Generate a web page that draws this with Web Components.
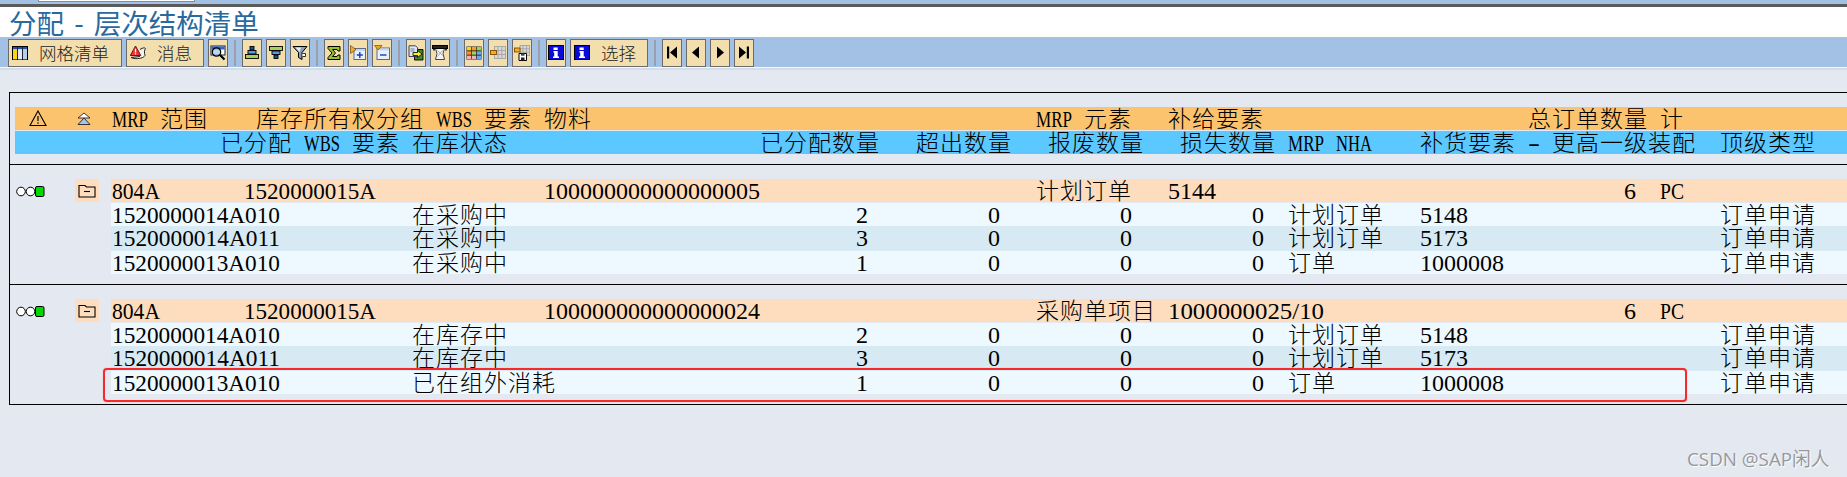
<!DOCTYPE html>
<html lang="zh"><head><meta charset="utf-8"><title>分配 - 层次结构清单</title>
<style>
html,body{margin:0;padding:0;background:#E4E8F0;width:1847px;height:477px;overflow:hidden}
body{font-family:"Liberation Serif","Noto Sans CJK SC",serif;color:#000}
</style></head><body>
<template id="ic-table"><svg viewBox="0 0 16 16"><rect x=".5" y="1.500" width="15" height="13" fill="#fff" stroke="#000"/><rect x="1" y="2" width="14" height="2.400" fill="#244fb0"/><rect x="1" y="4.400" width="4" height="10" fill="#ffd21c"/><rect x="6" y="4.400" width="4" height="10" fill="#dfe9f8"/><rect x="11" y="4.400" width="4" height="10" fill="#b7cdea"/><path d="M5.500 2v12M10.500 2v12" stroke="#223"/></svg></template>
<template id="ic-msg"><svg viewBox="0 0 16 16"><path d="M10 4.500c3-2 5-2 5.500-1-1 1-1.500 4-.5 7-1.500 2.500-6 3.500-11 3l-3-1 9-1" fill="#f2f2ea" stroke="#222" stroke-width="1"/><path d="M5.500 1 10.800 10.500H.300Z" fill="#f0303a" stroke="#5a1010" stroke-width=".9"/><path d="M5.500 3.800v3.600M5.500 8.200v1.200" stroke="#fff" stroke-width="1.300"/></svg></template>
<template id="ic-find"><svg viewBox="0 0 16 16"><rect x="1" y="1" width="14" height="9" fill="#fff" stroke="#123"/><rect x="1.500" y="1.500" width="13" height="3" fill="#2f66c8"/><circle cx="6.500" cy="7" r="4.200" fill="#9cc4f2" fill-opacity=".7" stroke="#000" stroke-width="1.200"/><path d="M10 10l4.500 4.500" stroke="#000" stroke-width="2.200"/></svg></template>
<template id="ic-asc"><svg viewBox="0 0 16 16"><rect x="6" y="1.500" width="4" height="3.500" fill="#1f4f9c" stroke="#000" stroke-width=".9"/><rect x="4" y="5.500" width="8" height="3.500" fill="#5a9ad6" stroke="#000" stroke-width=".9"/><rect x="1.500" y="9.500" width="13" height="4" fill="#a8cf5a" stroke="#000" stroke-width=".9"/></svg></template>
<template id="ic-desc"><svg viewBox="0 0 16 16"><rect x="1.500" y="1.500" width="13" height="4" fill="#a8cf5a" stroke="#000" stroke-width=".9"/><rect x="4" y="6" width="8" height="3.500" fill="#5a9ad6" stroke="#000" stroke-width=".9"/><rect x="6" y="10" width="4" height="3.500" fill="#1f4f9c" stroke="#000" stroke-width=".9"/></svg></template>
<template id="ic-filter"><svg viewBox="0 0 16 16"><path d="M1 1.500h14L10 7.500v7l-3.500-2V7.500Z" fill="#8f9dc0" stroke="#000" stroke-width="1"/><path d="M3.500 2.500H9L7.500 7Z" fill="#e8edf8"/><path d="M10.500 8.500h3v3h-3" fill="#fff" stroke="#000" stroke-width=".8"/></svg></template>
<template id="ic-sum"><svg viewBox="0 0 16 16"><path d="M2 1.500h12v4.500h-2L11 4.500H6.500L9.500 8 6.500 11.500H11l1-1.500h2v4.500H2v-2L6 8 2 3.500Z" fill="#9cc030" stroke="#000" stroke-width="1"/></svg></template>
<template id="ic-plus"><svg viewBox="0 0 16 16"><rect x="4" y="3.500" width="11.500" height="11" fill="#e8f0fc" stroke="#5a6a90"/><rect x="4.500" y="4" width="10.500" height="1.800" fill="#c5d4ec"/><path d="M.5.500 6 4.500.5 8.500Z" fill="#f7a81c" stroke="#5a3800" stroke-width=".6"/><path d="M9.800 7v6M6.800 10h6" stroke="#1a3ea8" stroke-width="1.400"/></svg></template>
<template id="ic-minus"><svg viewBox="0 0 16 16"><rect x="3" y="3" width="12.500" height="11.500" fill="#e8f0fc" stroke="#5a6a90"/><rect x="3.500" y="3.500" width="11.500" height="1.800" fill="#c5d4ec"/><path d="M.5.500H8L4.200 5Z" fill="#f7a81c" stroke="#5a3800" stroke-width=".6"/><path d="M6 10h6.500" stroke="#1a3ea8" stroke-width="1.400"/></svg></template>
<template id="ic-export"><svg viewBox="0 0 16 16"><path d="M6.500 4.500h8.500v10.500H6.500Z" fill="#3d8a28" stroke="#000" stroke-width=".9"/><path d="M1 .8h6.500l2 2V11.500H1Z" fill="#dde8f6" stroke="#26304a" stroke-width=".9"/><path d="M2.500 4h4M2.500 6h4" stroke="#6a7fa5"/><path d="M5 7.500h4.500V5.500L14 9l-4.500 3.500v-2H5Z" fill="#ffe836" stroke="#000" stroke-width=".8"/></svg></template>
<template id="ic-print"><svg viewBox="0 0 16 16"><path d="M3.500 3.500H12.500L11 8.500l1.500 6H3.500L5 8.500Z" fill="#f4f4f4" stroke="#333" stroke-width=".9"/><path d="M5.500 5.500l5 5M10.500 5.500l-5 6" stroke="#999" stroke-width=".8"/><rect x=".5" y=".5" width="15" height="3" fill="#222" stroke="#000"/><path d="M2 3.500v2M14 3.500v2" stroke="#000" stroke-width="1.500"/></svg></template>
<template id="ic-layout"><svg viewBox="0 0 16 16"><rect x=".5" y="1.500" width="15" height="13" fill="#222"/><g><rect x="1" y="2" width="4.200" height="3.400" fill="#ffd21c"/><rect x="5.900" y="2" width="4.200" height="3.400" fill="#ff9a2e"/><rect x="10.800" y="2" width="4.200" height="3.400" fill="#9bd55a"/><rect x="1" y="6.300" width="4.200" height="3.400" fill="#ff8a3c"/><rect x="5.900" y="6.300" width="4.200" height="3.400" fill="#9bd55a"/><rect x="10.800" y="6.300" width="4.200" height="3.400" fill="#6aa8f0"/><rect x="1" y="10.600" width="4.200" height="3.400" fill="#f5b0b8"/><rect x="5.900" y="10.600" width="4.200" height="3.400" fill="#f5b0b8"/><rect x="10.800" y="10.600" width="4.200" height="3.400" fill="#6aa8f0"/></g></svg></template>
<template id="ic-choose"><svg viewBox="0 0 16 16"><rect x="4.500" y="1.500" width="11" height="12" fill="#d8d8d8" stroke="#a8a8a8"/><path d="M8 1.500v12M11.800 1.500v12M4.500 5.500h11M4.500 9.500h11" stroke="#a8a8a8"/><rect x=".5" y="5.500" width="6" height="4" fill="#ffa91e" stroke="#7a4d00" stroke-width=".9"/></svg></template>
<template id="ic-save"><svg viewBox="0 0 16 16"><rect x="6" y=".5" width="9.500" height="10" fill="#d8d8d8" stroke="#a8a8a8"/><path d="M9 .5v10M12.500 .5v10M6 3.800h9.500M6 7.200h9.500" stroke="#a8a8a8"/><rect x=".5" y="3" width="5.500" height="4" fill="#ffa91e" stroke="#7a4d00" stroke-width=".9"/><path d="M5 8.500h7.500v7H5Z" fill="#fff" stroke="#000" stroke-width="1"/><rect x="7" y="8.500" width="3.500" height="2.200" fill="#444"/><rect x="7" y="12.500" width="3.500" height="3" fill="#222"/></svg></template>
<template id="ic-info"><svg viewBox="0 0 16 16"><rect x=".5" y=".5" width="15" height="14" fill="#0a0ad8" stroke="#000"/><path d="M5.500 2.500h4.200v2.500H5.500ZM5.500 6h4.200v5.500h1.300v1.500H5v-1.500h1.200V7.500h-.7Z" fill="#fff"/></svg></template>
<template id="ic-first"><svg viewBox="0 0 16 16"><path d="M3 1.500h2.200v12H3ZM13 1.500v12L6 7.500Z" fill="#000"/></svg></template>
<template id="ic-prev"><svg viewBox="0 0 16 16"><path d="M11 1.500v12L4 7.500Z" fill="#000"/></svg></template>
<template id="ic-next"><svg viewBox="0 0 16 16"><path d="M5 1.500v12L12 7.500Z" fill="#000"/></svg></template>
<template id="ic-last"><svg viewBox="0 0 16 16"><path d="M3 1.500v12L10 7.500ZM10.800 1.500H13v12h-2.200Z" fill="#000"/></svg></template>

<sap-shell>
  <sap-title>分配 - 层次结构清单</sap-title>
  <sap-toolbar>
    <sap-btn icon="table" w="114">网格清单</sap-btn>
    <sap-btn icon="msg" w="78">消息</sap-btn>
    <sap-btn icon="find"></sap-btn>
    <sap-sep></sap-sep>
    <sap-btn icon="asc"></sap-btn><sap-btn icon="desc"></sap-btn><sap-btn icon="filter"></sap-btn>
    <sap-sep></sap-sep>
    <sap-btn icon="sum"></sap-btn><sap-btn icon="plus"></sap-btn><sap-btn icon="minus"></sap-btn>
    <sap-sep></sap-sep>
    <sap-btn icon="export"></sap-btn><sap-btn icon="print"></sap-btn>
    <sap-sep></sap-sep>
    <sap-btn icon="layout"></sap-btn><sap-btn icon="choose"></sap-btn><sap-btn icon="save"></sap-btn>
    <sap-sep></sap-sep>
    <sap-btn icon="info"></sap-btn>
    <sap-btn icon="info" w="78">选择</sap-btn>
    <sap-sep></sap-sep>
    <sap-btn icon="first"></sap-btn><sap-btn icon="prev"></sap-btn><sap-btn icon="next"></sap-btn><sap-btn icon="last"></sap-btn>
  </sap-toolbar>
</sap-shell>

<sap-list>
  <sap-head>
    <sap-row tone="head1" lead="97">
      <sap-head-icons slot="lead"></sap-head-icons>
      <sap-t c="0">MRP 范围</sap-t><sap-t c="12">库存所有权分组 WBS 要素 物料</sap-t>
      <sap-t c="77">MRP 元素</sap-t><sap-t c="88">补给要素</sap-t><sap-t c="118">总订单数量 计</sap-t>
    </sap-row>
    <sap-row tone="head2" lead="97">
      <sap-t c="9">已分配 WBS 要素 在库状态</sap-t><sap-t c="54">已分配数量</sap-t><sap-t c="67">超出数量</sap-t>
      <sap-t c="78">报废数量</sap-t><sap-t c="89">损失数量</sap-t><sap-t c="98">MRP NHA</sap-t>
      <sap-t c="109">补货要素 - 更高一级装配</sap-t><sap-t c="134">顶级类型</sap-t>
    </sap-row>
  </sap-head>

  <sap-group>
    <sap-row tone="main"><sap-t c="0">804A</sap-t><sap-t c="11">1520000015A</sap-t><sap-t c="36">100000000000000005</sap-t><sap-t c="77">计划订单</sap-t><sap-t c="88">5144</sap-t><sap-t c="126">6</sap-t><sap-t c="129">PC</sap-t></sap-row>
    <sap-row tone="light"><sap-t c="0">1520000014A010</sap-t><sap-t c="25">在采购中</sap-t><sap-t c="62">2</sap-t><sap-t c="73">0</sap-t><sap-t c="84">0</sap-t><sap-t c="95">0</sap-t><sap-t c="98">计划订单</sap-t><sap-t c="109">5148</sap-t><sap-t c="134">订单申请</sap-t></sap-row>
    <sap-row tone="stripe"><sap-t c="0">1520000014A011</sap-t><sap-t c="25">在采购中</sap-t><sap-t c="62">3</sap-t><sap-t c="73">0</sap-t><sap-t c="84">0</sap-t><sap-t c="95">0</sap-t><sap-t c="98">计划订单</sap-t><sap-t c="109">5173</sap-t><sap-t c="134">订单申请</sap-t></sap-row>
    <sap-row tone="light"><sap-t c="0">1520000013A010</sap-t><sap-t c="25">在采购中</sap-t><sap-t c="62">1</sap-t><sap-t c="73">0</sap-t><sap-t c="84">0</sap-t><sap-t c="95">0</sap-t><sap-t c="98">订单</sap-t><sap-t c="109">1000008</sap-t><sap-t c="134">订单申请</sap-t></sap-row>
  </sap-group>

  <sap-group last>
    <sap-row tone="main"><sap-t c="0">804A</sap-t><sap-t c="11">1520000015A</sap-t><sap-t c="36">100000000000000024</sap-t><sap-t c="77">采购单项目</sap-t><sap-t c="88">1000000025/10</sap-t><sap-t c="126">6</sap-t><sap-t c="129">PC</sap-t></sap-row>
    <sap-row tone="light"><sap-t c="0">1520000014A010</sap-t><sap-t c="25">在库存中</sap-t><sap-t c="62">2</sap-t><sap-t c="73">0</sap-t><sap-t c="84">0</sap-t><sap-t c="95">0</sap-t><sap-t c="98">计划订单</sap-t><sap-t c="109">5148</sap-t><sap-t c="134">订单申请</sap-t></sap-row>
    <sap-row tone="stripe"><sap-t c="0">1520000014A011</sap-t><sap-t c="25">在库存中</sap-t><sap-t c="62">3</sap-t><sap-t c="73">0</sap-t><sap-t c="84">0</sap-t><sap-t c="95">0</sap-t><sap-t c="98">计划订单</sap-t><sap-t c="109">5173</sap-t><sap-t c="134">订单申请</sap-t></sap-row>
    <sap-row tone="light"><sap-t c="0">1520000013A010</sap-t><sap-t c="25">已在组外消耗</sap-t><sap-t c="62">1</sap-t><sap-t c="73">0</sap-t><sap-t c="84">0</sap-t><sap-t c="95">0</sap-t><sap-t c="98">订单</sap-t><sap-t c="109">1000008</sap-t><sap-t c="134">订单申请</sap-t></sap-row>
  </sap-group>
  <sap-mark></sap-mark>
</sap-list>
<sap-watermark>CSDN @SAP闲人</sap-watermark>

<script>
const CJK='"Liberation Serif","Noto Sans CJK SC",serif';
function def(name,css,html,extra){
  customElements.define(name,class extends HTMLElement{
    constructor(){super();this.attachShadow({mode:'open'}).innerHTML='<style>'+css+'</style>'+html;}
    connectedCallback(){if(extra)extra.call(this);}
  });
}
def('sap-shell',':host{display:block;background:#A3C1E4;padding-top:4px;position:relative}.cmd{position:absolute;left:38px;top:0;width:155px;height:1px;background:#fff;border:1px solid #8a8a8a;border-top:0}',
 '<div class="cmd"></div><slot></slot>');
def('sap-title',':host{display:block;height:29px;background:#fff;border-top:3px solid;border-image:linear-gradient(#5a5a5a 0 33%,#8f8f8f 33% 66%,#fff 66%) 3;border-bottom:1px solid #1E5A92;padding-left:9px;color:#2A699E;font:400 27.5px/29px "Noto Sans CJK SC",sans-serif;word-spacing:4px;white-space:pre}.t{position:relative;top:1px}',
 '<span class="t"><slot></slot></span>');
def('sap-toolbar',':host{display:flex;gap:4px;height:29px;margin-top:1px;padding:1px 0 0 8px;box-sizing:border-box;background:#A3C1E4;box-shadow:0 1px 0 #f4f6fa,0 3px 0 #d4dce8;align-items:flex-start}',
 '<slot></slot>');
customElements.define('sap-btn',class extends HTMLElement{
  constructor(){super();const r=this.attachShadow({mode:'open'});
    r.innerHTML=`<style>:host{display:flex;align-items:center;box-sizing:border-box;height:28px;width:20px;flex:none;background:#F3DFAE;border:1px solid #6b6b6b;padding-left:1px;color:#222;font:300 17.5px/26px "Noto Sans CJK SC",sans-serif}
    :host([w]){padding-left:3px;gap:11px}
    .i{display:block;width:16px;height:16px;flex:none}.i svg{display:block;width:16px;height:16px}
    .l{white-space:nowrap}</style><span class="i"></span><span class="l"><slot></slot></span>`;}
  connectedCallback(){
    const t=document.getElementById('ic-'+this.getAttribute('icon'));
    this.shadowRoot.querySelector('.i').append(t.content.cloneNode(true));
    if(this.hasAttribute('w'))this.style.width=this.getAttribute('w')+'px';
  }
});
def('sap-sep',':host{display:block;width:2px;height:26px;margin:1px 2px;background:#9b9fa8}','');
def('sap-list',':host{display:block;position:relative;margin:25px 0 0 9px;border:1px solid #000;border-right:0;box-sizing:border-box;height:313px}','<slot></slot>');
def('sap-head',':host{display:flex;flex-direction:column;gap:1px;padding:14px 0 10px 5px;border-bottom:1px solid #000}','<slot></slot>');
def('sap-head-icons',':host{display:flex;align-items:center;height:100%}svg{display:block}',
 `<svg style="margin-left:14px" width="18" height="17" viewBox="0 0 18 17"><path d="M9 1 17 15.500H1Z" fill="none" stroke="#000" stroke-width="1.100"/><path d="M9 6v5M9 12.200v1.500" stroke="#000" stroke-width="1.200"/></svg>
  <svg style="margin-left:30px" width="14" height="14" viewBox="0 0 14 14"><path d="M7 1 13 6H1Z" fill="#fff" stroke="#223" stroke-width=".9"/><path d="M7 6 13 12.500H1Z" fill="#a9c4ea" stroke="#223" stroke-width=".9"/></svg>`);
def('sap-group',':host{display:flex;padding-top:14px;height:105px;border-bottom:1px solid #000}:host([last]){border-bottom:0}.lead{box-sizing:border-box;width:101px;flex:none;display:flex;align-items:flex-start}.lights{margin:7px 0 0 6px;display:block}.fold{margin-left:30px;width:24px;height:23px;background:#FDDDBD;display:flex;align-items:center;justify-content:center}.rows{flex:1;display:flex;flex-direction:column;min-width:0}',
 `<div class="lead"><svg class="lights" width="29" height="11" viewBox="0 0 29 11"><circle cx="5" cy="5.500" r="4.300" fill="#fff" stroke="#000"/><circle cx="14.500" cy="5.500" r="4.300" fill="#fff" stroke="#000"/><rect x="19.500" y=".5" width="8.500" height="10" rx="1.500" fill="#00d800" stroke="#000"/></svg>
  <div class="fold"><svg width="18" height="14" viewBox="0 0 18 14"><path d="M1 3V1.500h6L8.500 3H17v10H1Z" fill="none" stroke="#000" stroke-width="1.100"/><path d="M6 7.500h6" stroke="#000" stroke-width="1.100"/></svg></div></div>
  <div class="rows"><slot></slot></div>`);
customElements.define('sap-row',class extends HTMLElement{
  constructor(){super();this.attachShadow({mode:'open'}).innerHTML=`<style>
   :host{display:flex;height:23px;flex:none;overflow:visible}
   :host([tone=head1]){background:#FCC36E}
   :host([tone=head2]){background:#5BC8FF}
   :host([tone=main]){background:#FDDDBD;margin-bottom:1px}
   :host([tone=light]){background:#EEF9FF}
   :host([tone=stripe]){background:#D7EAF4;height:25px}
   .lead{flex:none;width:1px}
   .g{display:grid;grid-template-columns:repeat(auto-fill,12px);grid-template-rows:23px;flex:1;min-width:0}
   </style><div class="lead"><slot name="lead"></slot></div><div class="g"><slot></slot></div>`;}
  connectedCallback(){if(this.hasAttribute('lead'))this.shadowRoot.querySelector('.lead').style.width=this.getAttribute('lead')+'px';}
});
const measure=document.createElement('canvas').getContext('2d');
measure.font='23px "Liberation Serif"';
customElements.define('sap-t',class extends HTMLElement{
  constructor(){super();this.attachShadow({mode:'open'});}
  connectedCallback(){
    const txt=this.textContent;
    this.style.gridColumn=(+this.getAttribute('c')+1)+' / span 1';
    this.style.gridRow='1';
    const runs=txt.match(/[\u4e00-\u9fff]+| +|[^\u4e00-\u9fff ]+/g)||[];
    this.shadowRoot.innerHTML=`<style>:host{display:block;white-space:pre;font:23px/23px ${CJK};color:#000;height:23px;position:relative;top:1px;width:max-content}
      .c{letter-spacing:1px;font-weight:300}.s{display:inline-block}.l{display:inline-block}.l>span{display:inline-block;transform-origin:0 50%}</style>`+
      runs.map(r=>{
        if(/^[\u4e00-\u9fff]/.test(r))return `<span class="c">${r}</span>`;
        if(r[0]===' ')return `<span class="s" style="width:${r.length*12}px">${r}</span>`;
        const k=r.length*12/measure.measureText(r).width;
        return `<span class="l" style="width:${r.length*12}px"><span style="transform:scaleX(${k.toFixed(4)})">${r}</span></span>`;
      }).join('');
  }
});
def('sap-mark',':host{display:block;position:absolute;left:93px;top:275px;width:1584px;height:34px;box-sizing:border-box;border:2px solid #F52A2A;border-radius:4px;box-shadow:0 0 1px #f66;pointer-events:none}','');
def('sap-watermark',':host{display:block;position:absolute;left:1687px;top:447px;font:18.800px/24px "Open Sans","Noto Sans CJK SC",sans-serif;color:#96989d;text-shadow:1px 1px 1px #fff;white-space:nowrap}','<slot></slot>');
</script>
</body></html>
